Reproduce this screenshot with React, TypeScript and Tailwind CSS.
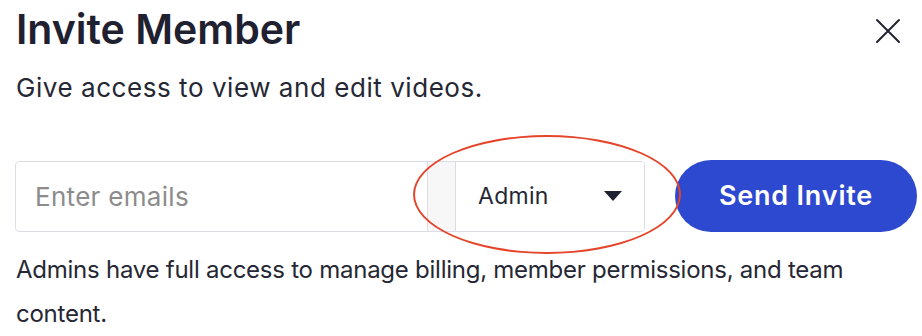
import React, { useState } from 'react';

const font = { fontFamily: 'Inter, "Open Sans", sans-serif' };

const CloseIcon: React.FC = () => (
  <svg width="26" height="26" viewBox="0 0 26 26" fill="none" stroke="#23242f" strokeWidth="2" strokeLinecap="round">
    <path d="M2 2L24 24M24 2L2 24" />
  </svg>
);

const InviteMember: React.FC = () => {
  const [emails, setEmails] = useState('');

  return (
    <div className="w-[922px] h-[336px] bg-white overflow-hidden" style={font}>
      <div className="flex items-start justify-between pl-4 pr-[21px] pt-[3px]">
        <h1 className="text-[41px] leading-[52px] font-semibold text-[#1f2130]">Invite Member</h1>
        <button className="mt-[15px]">
          <CloseIcon />
        </button>
      </div>
      <p className="pl-4 mt-[16px] text-[26px] leading-[34px] tracking-[0.55px] text-[#262734]">
        Give access to view and edit videos.
      </p>

      <div className="relative flex items-center pl-[15px] mt-[55px]">
        <div className="flex h-[71px] w-[630px] border border-[#dcdce5] rounded-[4px] overflow-hidden">
          <input
            value={emails}
            onChange={e => setEmails(e.target.value)}
            placeholder="Enter emails"
            className="flex-1 min-w-0 pl-[19px] text-[26px] tracking-[0.3px] text-[#262734] placeholder:text-[#8c8c8c] outline-none"
          />
          <div className="w-[29px] bg-[#f7f7f8] border-x border-[#dcdce5]" />
          <div className="w-[188px] flex items-center justify-between pl-[22px] pr-[22px] bg-white">
            <span className="text-[23px] tracking-[0.3px] text-[#262734]">Admin</span>
            <svg width="18" height="10" viewBox="0 0 18 10">
              <path d="M0 0H18L9 10Z" fill="#1f2130" />
            </svg>
          </div>
        </div>
        <button className="ml-[30px] h-[72px] w-[242px] rounded-full bg-[#2d49cf] text-white text-[27px] font-semibold tracking-[0.8px]">
          Send Invite
        </button>
        <div className="absolute left-[413px] top-[-25px] w-[268px] h-[119px] rounded-[50%] border-2 border-[#e5432a] pointer-events-none" />
      </div>

      <p className="pl-4 mt-[16px] text-[24px] leading-[44px] tracking-[-0.25px] text-[#262734] w-[880px]">
        Admins have full access to manage billing, member permissions, and team content.
      </p>
    </div>
  );
};

export default function App() {
  return <InviteMember />;
}
